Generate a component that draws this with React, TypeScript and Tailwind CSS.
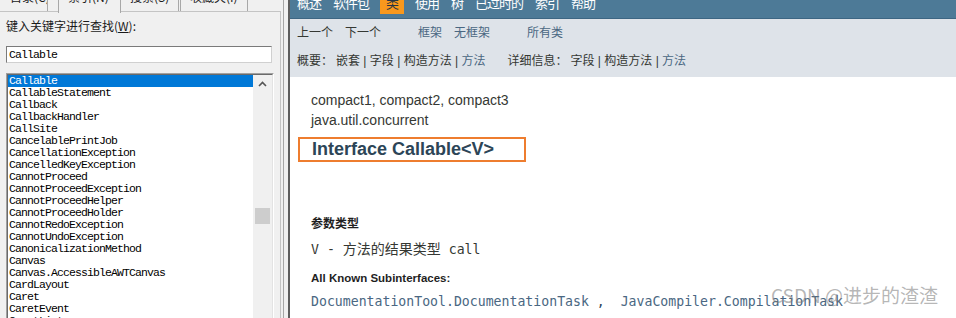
import React from "react";

const rows = [
  "Callable",
  "CallableStatement",
  "Callback",
  "CallbackHandler",
  "CallSite",
  "CancelablePrintJob",
  "CancellationException",
  "CancelledKeyException",
  "CannotProceed",
  "CannotProceedException",
  "CannotProceedHelper",
  "CannotProceedHolder",
  "CannotRedoException",
  "CannotUndoException",
  "CanonicalizationMethod",
  "Canvas",
  "Canvas.AccessibleAWTCanvas",
  "CardLayout",
  "Caret",
  "CaretEvent",
  "CaretListener",
];

function Sep() {
  return <span className="text-[#353833]">&nbsp;|&nbsp;</span>;
}

export default function App() {
  return (
    <div className="flex w-[956px] h-[318px] overflow-hidden bg-[#f0f0f0] font-['Noto_Sans_CJK_SC',sans-serif]">
      {/* LEFT PANE */}
      <div className="flex w-[290px] shrink-0 h-full">
        <div className="flex flex-col w-[281px] h-full">
          {/* tabs */}
          <div className="flex h-[12px] items-start text-[12px] leading-[14px] text-[#1a1a1a]">
            <div className="w-[48px] h-[12px] border-r border-[#a8a8a8] overflow-hidden">
              <div className="-mt-[10px] pl-[10px] whitespace-nowrap">目录(C)</div>
            </div>
            <div className="w-[10px]" />
            <div className="relative z-10 w-[63px] h-[13px] border-l border-r border-[#a8a8a8] bg-[#f0f0f0] overflow-hidden">
              <div className="-mt-[10px] pl-[9px] whitespace-nowrap">索引(N)</div>
            </div>
            <div className="w-[1px]" />
            <div className="w-[57px] h-[12px] border-r border-[#a8a8a8] overflow-hidden">
              <div className="-mt-[10px] pl-[8px] whitespace-nowrap">搜索(S)</div>
            </div>
            <div className="w-[1px]" />
            <div className="w-[68px] h-[12px] border-l border-r border-[#a8a8a8] overflow-hidden">
              <div className="-mt-[10px] pl-[9px] whitespace-nowrap">收藏夹(I)</div>
            </div>
          </div>
          {/* panel */}
          <div className="-mt-px flex-1 border-t border-r border-[#c4c4c4] bg-[#f0f0f0] flex flex-col">
            <div className="pl-[6px] pt-[6px] text-[12px] leading-[16px] text-[#1a1a1a] whitespace-nowrap">
              键入关键字进行查找(<span className="underline">W</span>):
            </div>
            <div className="ml-[6px] mt-[12px] w-[266px] h-[17px] bg-white border border-[#7a7a7a] border-b-[#d0d0d0] border-r-[#d0d0d0] pl-[2px] font-['Liberation_Mono',monospace] text-[11.5px] tracking-[-0.9px] leading-[15px] text-black">
              Callable
            </div>
            <div className="ml-[6px] mt-[10px] w-[268px] flex-1 bg-white border border-[#a0a0a0] border-r-white border-b-white">
              <div className="h-full flex border border-[#6a6a6a] border-r-[#e3e3e3] border-b-[#e3e3e3]">
                <div className="w-[245px] font-['Liberation_Mono',monospace] text-[11.5px] tracking-[-0.9px] leading-[12px] text-black">
                  {rows.map((r, i) => (
                    <div
                      key={r}
                      className={
                        i === 0
                          ? "h-[12px] pl-px bg-[#0078d7] text-white whitespace-nowrap"
                          : "h-[12px] pl-px whitespace-nowrap"
                      }
                    >
                      {r}
                    </div>
                  ))}
                </div>
                <div className="flex-1 bg-[#f0f0f0] flex flex-col items-center">
                  <div className="h-[17px] w-full flex items-center justify-center">
                    <svg width="9" height="6" viewBox="0 0 9 6">
                      <path d="M1 5 L4.5 1.5 L8 5" fill="none" stroke="#555" strokeWidth="1.6" />
                    </svg>
                  </div>
                  <div className="h-[116px]" />
                  <div className="h-[16px] w-[15px] bg-[#cdcdcd]" />
                </div>
              </div>
            </div>
          </div>
        </div>
        {/* splitter */}
        <div className="flex w-[9px] h-full">
          <div className="w-[2px] bg-[#f0f0f0]" />
          <div className="w-[1px] bg-[#a6a6a6]" />
          <div className="w-[4px] bg-[#f0f0f0]" />
          <div className="w-[2px] bg-[#5e5e5e]" />
        </div>
      </div>

      {/* RIGHT PANE */}
      <div className="relative flex flex-col w-[666px] h-full bg-white font-['Liberation_Sans','Noto_Sans_CJK_SC',sans-serif]">
        {/* top nav */}
        <div className="h-[19px] bg-[#4d7a97] border-b border-[#3d6683] flex pl-px items-start text-[13px] tracking-[-1px] leading-[16px] text-white">
          {[
            ["概述", false],
            ["软件包", false],
            ["类", true],
            ["使用", false],
            ["树", false],
            ["已过时的", false],
            ["索引", false],
            ["帮助", false],
          ].map(([t, sel]) => (
            <div
              key={t as string}
              className={
                sel
                  ? "h-[14px] px-[6px] mx-[5px] bg-[#f8981d] text-[#253441] overflow-hidden"
                  : "h-[14px] px-[6px] overflow-hidden"
              }
            >
              <div className="-mt-[4px] whitespace-nowrap">{t as string}</div>
            </div>
          ))}
        </div>
        {/* sub nav */}
        <div className="h-[58px] bg-[#dee3e9] flex flex-col text-[12px] leading-[14px]">
          <div className="h-[28px] flex items-center pl-[7px] whitespace-nowrap">
            <span className="text-[#353833]">上一个</span>
            <span className="ml-[12px] text-[#353833]">下一个</span>
            <span className="ml-[37px] text-[#4a6782]">框架</span>
            <span className="ml-[12px] text-[#4a6782]">无框架</span>
            <span className="ml-[37px] text-[#4a6782]">所有类</span>
          </div>
          <div className="h-[28px] flex items-center pl-[7px] whitespace-nowrap text-[#353833]">
            <span>概要：</span>
            <span className="ml-[3px]">嵌套</span>
            <Sep />
            <span>字段</span>
            <Sep />
            <span>构造方法</span>
            <Sep />
            <span className="text-[#4a6782]">方法</span>
            <span className="ml-[22px]">详细信息：</span>
            <span className="ml-[3px]">字段</span>
            <Sep />
            <span>构造方法</span>
            <Sep />
            <span className="text-[#4a6782]">方法</span>
          </div>
        </div>
        {/* content */}
        <div className="flex flex-col pl-[8px] pt-[13px] text-[#353833]">
          <div className="pl-[13px] text-[14px] leading-[20px]">compact1, compact2, compact3</div>
          <div className="pl-[13px] text-[14px] leading-[20px]">java.util.concurrent</div>
          <div className="mt-[7px] w-[228px] h-[25px] border-2 border-[#ee7d2f] pl-[12px] text-[18px] leading-[21px] font-bold text-[#2c4557] whitespace-nowrap">
            Interface Callable&lt;V&gt;
          </div>
          <div className="mt-[54px] pl-[13px] text-[12px] leading-[16px] font-bold text-[#1f1f1f]">参数类型</div>
          <div className="mt-[7px] pl-[13px] text-[13.2px] leading-[20px] font-['DejaVu_Sans_Mono','Noto_Sans_CJK_SC',monospace] text-[#353833] whitespace-nowrap">
            V - <span className="text-[14px]">方法的结果类型</span> call
          </div>
          <div className="mt-[10px] pl-[13px] text-[11.5px] leading-[16px] font-bold text-[#1f1f1f]">All Known Subinterfaces:</div>
          <div className="mt-[6px] pl-[13px] text-[13.2px] leading-[20px] font-['DejaVu_Sans_Mono',monospace] text-[#2c4557] whitespace-nowrap">
            <span className="text-[#4a6782]">DocumentationTool.DocumentationTask</span> ,&nbsp;&nbsp;<span className="text-[#4a6782]">JavaCompiler.CompilationTask</span>
          </div>
        </div>
        {/* watermark */}
        <div className="absolute left-[481px] top-[283px] text-[19px] leading-[24px] text-[rgba(120,120,120,0.55)] font-['Noto_Sans_CJK_SC',sans-serif] whitespace-nowrap">
          CSDN @进步的渣渣
        </div>
      </div>
    </div>
  );
}
